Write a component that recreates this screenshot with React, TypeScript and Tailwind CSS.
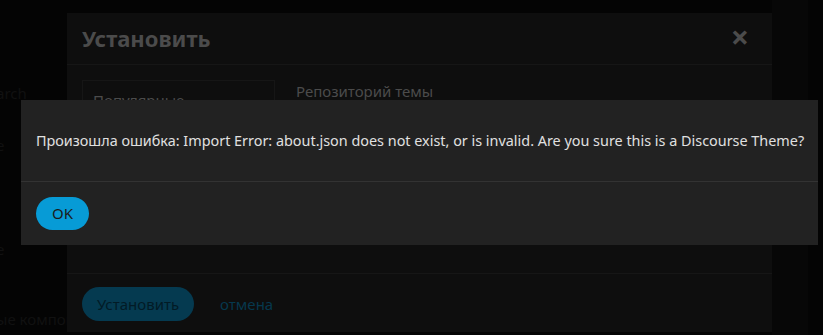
const FONT = "font-['Noto_Sans','Open_Sans',sans-serif]";

const App = () => {
  return (
    <div className={`relative w-[823px] h-[335px] overflow-hidden bg-[#040404] ${FONT}`}>
      {/* faint page behind */}
      <div className="absolute left-0 top-0 h-full w-[67px] overflow-hidden text-[15px] text-[#111]">
        <p className="absolute -left-1 top-[82px]">arch</p>
        <p className="absolute -left-1 top-[134px]">e</p>
        <p className="absolute -left-1 top-[238px]">e</p>
        <p className="absolute -left-1 top-[308px] whitespace-nowrap">ые компон</p>
      </div>
      <div className="absolute left-[772px] top-0 h-full w-[36px] bg-[#070707]" />

      {/* install modal under the alert */}
      <div className="absolute left-[67px] top-[13px] flex h-[319px] w-[705px] flex-col bg-[#0e0e0e]">
        <div className="flex h-[52px] items-center justify-between border-b border-[#161616] px-[15px]">
          <h2 className="text-[22px] font-bold text-[#4b4b4b]">Установить</h2>
          <span className="mr-[8px] -mt-[4px] text-[32px] font-bold leading-none text-[#4b4b4b]">×</span>
        </div>
        <div className="flex flex-1 gap-[21px] border-b border-[#161616] px-[15px] pt-[15px]">
          <div className="h-[150px] w-[193px] border border-[#161616] px-[10px] pt-[8px] text-[15px] text-[#4b4b4b]">
            Популярные
          </div>
          <p className="text-[15px] text-[#4b4b4b]">Репозиторий темы</p>
        </div>
        <div className="flex h-[58px] items-center gap-[26px] px-[15px] pt-[2px]">
          <button className="h-[34px] rounded-full bg-[#053a50] px-[15px] text-[15px] text-[#021b26]">
            Установить
          </button>
          <span className="text-[15px] text-[#06384d]">отмена</span>
        </div>
      </div>

      {/* alert */}
      <div className="absolute left-[21px] top-[100px] flex h-[145px] w-[797px] flex-col bg-[#222]">
        <div className="flex h-[82px] items-center border-b border-[#333] px-[15px]">
          <p className="whitespace-nowrap text-[14.4px] text-[#e0e0e0]">
            Произошла ошибка: Import Error: about.json does not exist, or is invalid. Are you sure this is a Discourse
            Theme?
          </p>
        </div>
        <div className="flex flex-1 items-center px-[15px]">
          <button className="h-[33px] w-[53px] rounded-full bg-[#079bd6] text-[15px] text-[#1b1b1b]">OK</button>
        </div>
      </div>
    </div>
  );
};

export default App;
